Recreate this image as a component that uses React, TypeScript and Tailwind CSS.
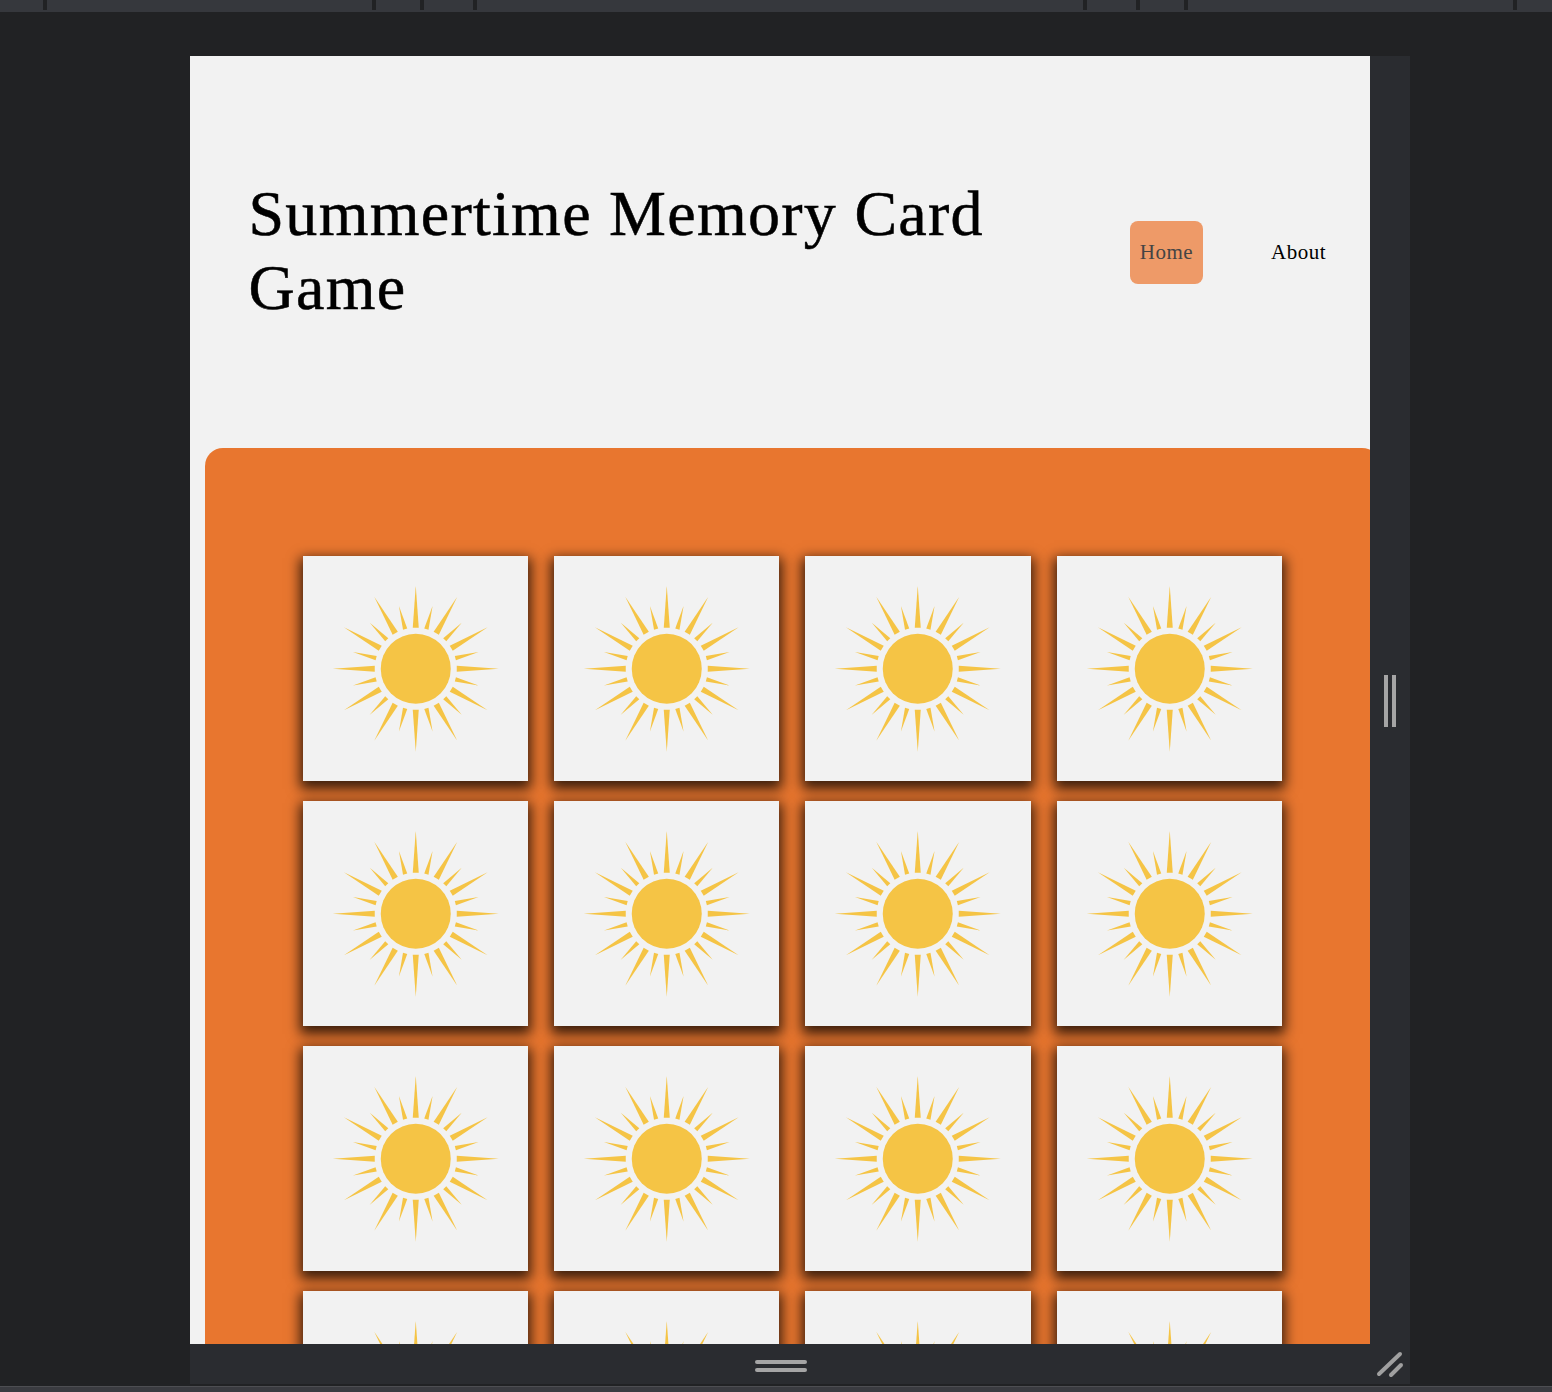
const serif = '[font-family:"Liberation_Serif",serif]'

const tabMarks = [43, 372, 420, 473, 1083, 1136, 1184, 1513]

function Sun() {
  const rays = Array.from({ length: 24 }, (_, i) => i * 15)

  return (
    <svg viewBox="-112.75 -112.75 225.5 225.5" className="w-full h-full">
      <circle cx="0" cy="0" r="35" fill="#f5c445" />
      {rays.map((angle, index) => {
        const long = index % 2 === 0
        const points = long ? '-3,-41 3,-41 0,-83' : '-2.2,-41 2.2,-41 0,-65'
        return <polygon key={angle} points={points} fill="#f5c445" transform={`rotate(${angle})`} />
      })}
    </svg>
  )
}

function Card() {
  return (
    <div className="h-[225.5px] bg-[#f2f2f2] shadow-[0_5px_12px_3px_rgba(0,0,0,0.75)]">
      <Sun />
    </div>
  )
}

export default function App() {
  return (
    <div className="relative flex flex-col w-[1552px] h-[1392px] overflow-hidden bg-[#212224]">
      <div className="flex justify-start h-3 bg-[#36383d]">
        {tabMarks.map((x, index) => (
          <span key={index} className="absolute top-0 w-1 h-2.5 bg-[#212224]" style={{ left: x }} />
        ))}
      </div>

      <div className="flex flex-col w-[1220px] ml-[190px] mt-11 h-[1328px]">
        <div className="flex flex-1 min-h-0">
          <div className="w-[1180px] h-full overflow-hidden bg-[#f2f2f2]">
            <header className="flex items-center justify-between h-[392px] pl-[58.5px] pr-[35px]">
              <h1 className={`w-[800px] -mt-[2px] ${serif} text-[64px] leading-[74px] tracking-[1.27px] [-webkit-text-stroke:0.5px_black] text-black`}>
                Summertime Memory Card Game
              </h1>
              <nav className={`flex items-center gap-[59px] ${serif} text-[21px] tracking-[0.5px]`}>
                <a className="flex items-center justify-center w-[73px] h-[63px] rounded-lg bg-[#ee9a68] text-[#444444]">
                  <span className="pt-[2px]">Home</span>
                </a>
                <a className="flex items-center justify-center w-[73px] h-[63px] text-black">
                  <span className="pt-[2px]">About</span>
                </a>
              </nav>
            </header>

            <main className="ml-[15px] w-[1175px] pt-[107.6px] pl-[97.6px] pb-10 rounded-[18px] bg-[#e8762f]">
              <div className="grid grid-cols-[repeat(4,225.5px)] gap-x-[25.9px] gap-y-[19.5px]">
                {Array.from({ length: 16 }).map((_, index) => (
                  <Card key={index} />
                ))}
              </div>
            </main>
          </div>

          <div className="flex flex-1 items-center justify-center gap-1 pt-[2px] bg-[#2a2c30]">
            <span className="w-1 h-[52px] bg-[#a5a5a5]" />
            <span className="w-1 h-[52px] bg-[#a5a5a5]" />
          </div>
        </div>

        <div className="relative flex flex-col shrink-0 items-center justify-center gap-1 h-10 pt-[4px] pr-[38px] bg-[#2a2c30]">
          <span className="w-[52px] h-1 rounded-sm bg-[#a5a5a5]" />
          <span className="w-[52px] h-1 rounded-sm bg-[#a5a5a5]" />
          <svg viewBox="0 0 32 32" className="absolute right-1 bottom-[5px] w-8 h-8" fill="none" stroke="#a0a0a0" strokeWidth="4" strokeLinecap="round">
            <line x1="5" y1="27" x2="26" y2="7" />
            <line x1="17" y1="28" x2="27" y2="18" />
          </svg>
        </div>
      </div>

      <div className="absolute left-0 right-0 bottom-0 h-[6px] border-t border-[#4d4e52] bg-[#3a3b40]" />
    </div>
  )
}
